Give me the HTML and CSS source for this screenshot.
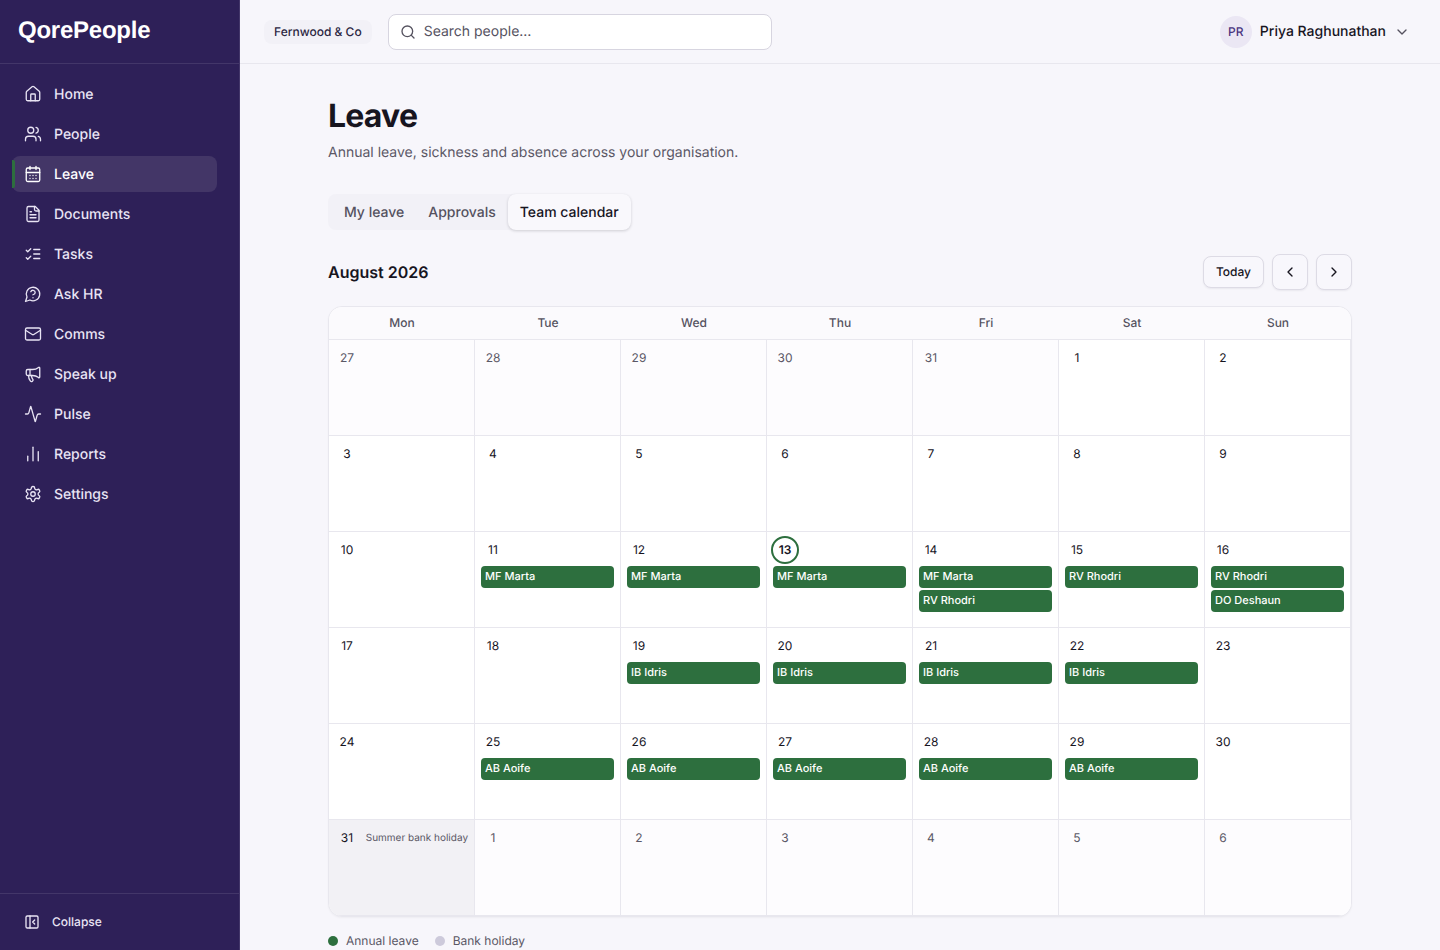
FILE: index.html
```html
<!DOCTYPE html>
<html lang="en">
<head>
    <meta charset="UTF-8">
    <meta name="viewport" content="width=device-width, initial-scale=1.0">
    <title>Leave - QorePeople</title>
    <link rel="stylesheet" href="styles.css">
</head>
<body>
    <aside class="sidebar">
        <div class="brand"><a href="#" class="logo">QorePeople</a></div>
        <nav class="nav">
            <a href="#"><svg class="icon" viewBox="0 0 24 24"><path d="M15 21v-8a1 1 0 0 0-1-1h-4a1 1 0 0 0-1 1v8"/><path d="M3 10a2 2 0 0 1 .709-1.528l7-6a2 2 0 0 1 2.582 0l7 6A2 2 0 0 1 21 10v9a2 2 0 0 1-2 2H5a2 2 0 0 1-2-2z"/></svg>Home</a>
            <a href="#"><svg class="icon" viewBox="0 0 24 24"><path d="M16 21v-2a4 4 0 0 0-4-4H6a4 4 0 0 0-4 4v2"/><circle cx="9" cy="7" r="4"/><path d="M22 21v-2a4 4 0 0 0-3-3.87"/><path d="M16 3.13a4 4 0 0 1 0 7.75"/></svg>People</a>
            <a href="#" class="active" aria-current="page"><svg class="icon" viewBox="0 0 24 24"><path d="M8 2v4"/><path d="M16 2v4"/><rect x="3" y="4" width="18" height="18" rx="2"/><path d="M3 10h18"/><path d="M8 14h.01M12 14h.01M16 14h.01M8 18h.01M12 18h.01M16 18h.01"/></svg>Leave</a>
            <a href="#"><svg class="icon" viewBox="0 0 24 24"><path d="M15 2H6a2 2 0 0 0-2 2v16a2 2 0 0 0 2 2h12a2 2 0 0 0 2-2V7Z"/><path d="M14 2v4a2 2 0 0 0 2 2h4"/><path d="M10 9H8"/><path d="M16 13H8"/><path d="M16 17H8"/></svg>Documents</a>
            <a href="#"><svg class="icon" viewBox="0 0 24 24"><path d="m3 17 2 2 4-4"/><path d="m3 7 2 2 4-4"/><path d="M13 6h8"/><path d="M13 12h8"/><path d="M13 18h8"/></svg>Tasks</a>
            <a href="#"><svg class="icon" viewBox="0 0 24 24"><path d="M7.9 20A9 9 0 1 0 4 16.1L2 22Z"/><path d="M9.09 9a3 3 0 0 1 5.83 1c0 2-3 3-3 3"/><path d="M12 17h.01"/></svg>Ask HR</a>
            <a href="#"><svg class="icon" viewBox="0 0 24 24"><rect x="2" y="4" width="20" height="16" rx="2"/><path d="m22 7-8.97 5.7a1.94 1.94 0 0 1-2.06 0L2 7"/></svg>Comms</a>
            <a href="#"><svg class="icon" viewBox="0 0 24 24"><path d="M11 6a13 13 0 0 0 8.4-2.8A1 1 0 0 1 21 4v12a1 1 0 0 1-1.6.8A13 13 0 0 0 11 14H5a2 2 0 0 1-2-2V8a2 2 0 0 1 2-2z"/><path d="M6 14a12 12 0 0 0 2.4 7.2 2 2 0 0 0 3.2-2.4A8 8 0 0 1 10 14"/><path d="M8 6v8"/></svg>Speak up</a>
            <a href="#"><svg class="icon" viewBox="0 0 24 24"><path d="M22 12h-2.48a2 2 0 0 0-1.93 1.46l-2.35 8.36a.25.25 0 0 1-.48 0L9.24 2.18a.25.25 0 0 0-.48 0l-2.35 8.36A2 2 0 0 1 4.49 12H2"/></svg>Pulse</a>
            <a href="#"><svg class="icon" viewBox="0 0 24 24"><path d="M5 21v-6"/><path d="M12 21V3"/><path d="M19 21V9"/></svg>Reports</a>
            <a href="#"><svg class="icon" viewBox="0 0 24 24"><path d="M12.22 2h-.44a2 2 0 0 0-2 2v.18a2 2 0 0 1-1 1.73l-.43.25a2 2 0 0 1-2 0l-.15-.08a2 2 0 0 0-2.73.73l-.22.38a2 2 0 0 0 .73 2.73l.15.1a2 2 0 0 1 1 1.72v.51a2 2 0 0 1-1 1.74l-.15.09a2 2 0 0 0-.73 2.73l.22.38a2 2 0 0 0 2.73.73l.15-.08a2 2 0 0 1 2 0l.43.25a2 2 0 0 1 1 1.73V20a2 2 0 0 0 2 2h.44a2 2 0 0 0 2-2v-.18a2 2 0 0 1 1-1.73l.43-.25a2 2 0 0 1 2 0l.15.08a2 2 0 0 0 2.73-.73l.22-.39a2 2 0 0 0-.73-2.73l-.15-.08a2 2 0 0 1-1-1.74v-.5a2 2 0 0 1 1-1.74l.15-.09a2 2 0 0 0 .73-2.73l-.22-.38a2 2 0 0 0-2.73-.73l-.15.08a2 2 0 0 1-2 0l-.43-.25a2 2 0 0 1-1-1.73V4a2 2 0 0 0-2-2z"/><circle cx="12" cy="12" r="3"/></svg>Settings</a>
        </nav>
        <div class="sidebar-footer">
            <button type="button" class="collapse"><svg class="icon" viewBox="0 0 24 24"><rect x="3" y="3" width="18" height="18" rx="2"/><path d="M9 3v18"/><path d="m16 15-3-3 3-3"/></svg>Collapse</button>
        </div>
    </aside>

    <div class="page">
        <header class="topbar">
            <span class="company">Fernwood &amp; Co</span>
            <label class="search">
                <svg class="icon" viewBox="0 0 24 24"><circle cx="11" cy="11" r="8"/><path d="m21 21-4.3-4.3"/></svg>
                <input type="search" placeholder="Search people…" aria-label="Search people">
            </label>
            <button type="button" class="user">
                <span class="avatar">PR</span>
                <span>Priya Raghunathan</span>
                <svg class="icon" viewBox="0 0 24 24"><path d="m6 9 6 6 6-6"/></svg>
            </button>
        </header>

        <main class="content">
            <h1>Leave</h1>
            <p class="subtitle">Annual leave, sickness and absence across your organisation.</p>

            <div class="tabs" role="tablist">
                <button type="button" role="tab" aria-selected="false">My leave</button>
                <button type="button" role="tab" aria-selected="false">Approvals</button>
                <button type="button" role="tab" aria-selected="true" class="selected">Team calendar</button>
            </div>

            <div class="month-bar">
                <h2>August 2026</h2>
                <div class="month-controls">
                    <button type="button" class="today-button">Today</button>
                    <button type="button" class="arrow" aria-label="Previous month"><svg class="icon" viewBox="0 0 24 24"><path d="m15 18-6-6 6-6"/></svg></button>
                    <button type="button" class="arrow" aria-label="Next month"><svg class="icon" viewBox="0 0 24 24"><path d="m9 18 6-6-6-6"/></svg></button>
                </div>
            </div>

            <div class="calendar">
                <table>
                    <thead>
                        <tr><th>Mon</th><th>Tue</th><th>Wed</th><th>Thu</th><th>Fri</th><th>Sat</th><th>Sun</th></tr>
                    </thead>
                    <tbody>
                        <tr>
                            <td class="outside"><span class="day">27</span></td>
                            <td class="outside"><span class="day">28</span></td>
                            <td class="outside"><span class="day">29</span></td>
                            <td class="outside"><span class="day">30</span></td>
                            <td class="outside"><span class="day">31</span></td>
                            <td><span class="day">1</span></td>
                            <td><span class="day">2</span></td>
                        </tr>
                        <tr>
                            <td><span class="day">3</span></td>
                            <td><span class="day">4</span></td>
                            <td><span class="day">5</span></td>
                            <td><span class="day">6</span></td>
                            <td><span class="day">7</span></td>
                            <td><span class="day">8</span></td>
                            <td><span class="day">9</span></td>
                        </tr>
                        <tr>
                            <td><span class="day">10</span></td>
                            <td><span class="day">11</span><div class="event">MF Marta</div></td>
                            <td><span class="day">12</span><div class="event">MF Marta</div></td>
                            <td><span class="day today">13</span><div class="event">MF Marta</div></td>
                            <td><span class="day">14</span><div class="event">MF Marta</div><div class="event">RV Rhodri</div></td>
                            <td><span class="day">15</span><div class="event">RV Rhodri</div></td>
                            <td><span class="day">16</span><div class="event">RV Rhodri</div><div class="event">DO Deshaun</div></td>
                        </tr>
                        <tr>
                            <td><span class="day">17</span></td>
                            <td><span class="day">18</span></td>
                            <td><span class="day">19</span><div class="event">IB Idris</div></td>
                            <td><span class="day">20</span><div class="event">IB Idris</div></td>
                            <td><span class="day">21</span><div class="event">IB Idris</div></td>
                            <td><span class="day">22</span><div class="event">IB Idris</div></td>
                            <td><span class="day">23</span></td>
                        </tr>
                        <tr>
                            <td><span class="day">24</span></td>
                            <td><span class="day">25</span><div class="event">AB Aoife</div></td>
                            <td><span class="day">26</span><div class="event">AB Aoife</div></td>
                            <td><span class="day">27</span><div class="event">AB Aoife</div></td>
                            <td><span class="day">28</span><div class="event">AB Aoife</div></td>
                            <td><span class="day">29</span><div class="event">AB Aoife</div></td>
                            <td><span class="day">30</span></td>
                        </tr>
                        <tr>
                            <td class="holiday"><div class="day-row"><span class="day">31</span><span class="holiday-name">Summer bank holiday</span></div></td>
                            <td class="outside"><span class="day">1</span></td>
                            <td class="outside"><span class="day">2</span></td>
                            <td class="outside"><span class="day">3</span></td>
                            <td class="outside"><span class="day">4</span></td>
                            <td class="outside"><span class="day">5</span></td>
                            <td class="outside"><span class="day">6</span></td>
                        </tr>
                    </tbody>
                </table>
            </div>

            <ul class="legend">
                <li><span class="dot dot-leave"></span>Annual leave</li>
                <li><span class="dot dot-holiday"></span>Bank holiday</li>
            </ul>
        </main>
    </div>
</body>
</html>
```

FILE: styles.css
```css
* {
    box-sizing: border-box;
}

body {
    margin: 0;
    display: flex;
    height: 100vh;
    overflow: hidden;
    background: #f7f6fb;
    color: #17151f;
    font-family: Inter, "Liberation Sans", sans-serif;
    font-size: 14px;
    line-height: 21px;
    text-rendering: geometricPrecision;
}

button,
input {
    font: inherit;
    color: inherit;
    text-rendering: inherit;
}

button {
    cursor: pointer;
}

.icon {
    width: 16px;
    height: 16px;
    flex: none;
    fill: none;
    stroke: currentColor;
    stroke-width: 2;
    stroke-linecap: round;
    stroke-linejoin: round;
}

/* Sidebar */
.sidebar {
    width: 240px;
    flex: none;
    display: flex;
    flex-direction: column;
    background: #2e2058;
    border-right: 1px solid #433669;
    color: #e9e4f4;
}

.brand {
    height: 64px;
    display: flex;
    align-items: center;
    padding: 0 18px 2px;
    border-bottom: 1px solid #433669;
}

.logo {
    color: #fff;
    font-family: "Liberation Sans", Arial, sans-serif;
    font-size: 24px;
    font-weight: 700;
    letter-spacing: -0.01em;
    text-decoration: none;
}

.nav {
    flex: 1;
    display: flex;
    flex-direction: column;
    gap: 4px;
    padding: 12px 22px 12px 12px;
    overflow: hidden;
}

.nav a {
    height: 36px;
    display: flex;
    align-items: center;
    gap: 12px;
    padding: 0 12px;
    border-radius: 8px;
    color: inherit;
    font-weight: 500;
    text-decoration: none;
}

.nav .icon {
    width: 18px;
    height: 18px;
    stroke-width: 1.75;
}

.nav a.active {
    position: relative;
    background: #433667;
    color: #fff;
}

.nav a.active::before {
    content: "";
    position: absolute;
    left: 0;
    top: 4px;
    bottom: 4px;
    width: 3px;
    border-radius: 0 2px 2px 0;
    background: #2d6f3e;
}

.sidebar-footer {
    padding: 10px 12px;
    border-top: 1px solid #433669;
}

.collapse {
    width: 100%;
    height: 36px;
    display: flex;
    align-items: center;
    gap: 12px;
    padding: 0 12px;
    border: 0;
    background: none;
    font-size: 12px;
    line-height: 20px;
    font-weight: 500;
}

/* Top bar */
.page {
    flex: 1;
    min-width: 0;
}

.topbar {
    height: 64px;
    display: flex;
    align-items: center;
    gap: 16px;
    padding: 0 24px;
    border-bottom: 1px solid #e8e7ee;
}

.company {
    padding: 2px 10px;
    border-radius: 8px;
    background: #f2f1f7;
    color: #2c2742;
    font-size: 12px;
    line-height: 20px;
    font-weight: 500;
}

.search {
    width: 384px;
    height: 36px;
    display: flex;
    align-items: center;
    gap: 8px;
    padding: 0 11px;
    border: 1px solid #d7d5e0;
    border-radius: 8px;
    background: #fff;
    color: #55525f;
}

.search input {
    flex: 1;
    min-width: 0;
    height: 21px;
    padding: 0;
    border: 0;
    outline: 0;
    background: none;
}

.search input::placeholder {
    color: #55525f;
    opacity: 1;
}

.user {
    display: flex;
    align-items: center;
    gap: 8px;
    margin-left: auto;
    padding: 0 6px;
    border: 0;
    background: none;
    font-weight: 500;
}

.user .icon {
    color: #55525f;
}

.avatar {
    width: 32px;
    height: 32px;
    display: grid;
    place-items: center;
    border-radius: 50%;
    background: #ebe7f4;
    color: #4a3580;
    font-size: 12px;
    line-height: 20px;
}

/* Content */
.content {
    max-width: 1072px;
    margin: 0 auto;
    padding: 32px 24px;
}

h1 {
    margin: 0;
    font-size: 32px;
    line-height: 40px;
    font-weight: 700;
    letter-spacing: -0.025em;
}

.subtitle {
    margin: 6px 0 31px;
    color: #5b5866;
}

.tabs {
    width: fit-content;
    height: 36px;
    display: flex;
    padding-left: 4px;
    border-radius: 8px;
    background: #f2f1f7;
}

.tabs button {
    padding: 0 12px;
    border: 0;
    border-radius: 8px;
    background: none;
    color: #55525f;
    font-weight: 500;
}

.tabs .selected {
    background: #f9f8fc;
    color: #17151f;
    box-shadow: 0 1px 3px rgba(23, 21, 31, 0.18);
}

.month-bar {
    display: flex;
    align-items: center;
    justify-content: space-between;
    margin: 24px 0 16px;
}

h2 {
    margin: 0;
    font-size: 16px;
    line-height: 24px;
    font-weight: 600;
}

.month-controls {
    display: flex;
    align-items: center;
    gap: 8px;
}

.month-controls button {
    border: 1px solid #dddbe5;
    border-radius: 8px;
    background: #f8f7fc;
    box-shadow: 0 1px 2px rgba(23, 21, 31, 0.06);
}

.month-controls .today-button {
    height: 32px;
    padding: 0 12px;
    font-size: 12px;
    line-height: 20px;
    font-weight: 500;
}

.arrow {
    width: 36px;
    height: 36px;
    display: grid;
    place-items: center;
    padding: 0;
}

/* Calendar */
.calendar {
    overflow: hidden;
    border: 1px solid #e8e7ee;
    border-radius: 14px;
    background: #fff;
    box-shadow: 0 1px 2px rgba(23, 21, 31, 0.04);
}

table {
    width: 100%;
    border-spacing: 0;
    table-layout: fixed;
}

th {
    height: 33px;
    padding: 0;
    border-bottom: 1px solid #e8e7ee;
    background: #fbfafd;
    color: #55525f;
    font-size: 12px;
    line-height: 20px;
    font-weight: 500;
}

td {
    height: 96px;
    padding: 4px;
    border-right: 1px solid #e8e7ee;
    border-bottom: 1px solid #e8e7ee;
    vertical-align: top;
}

tbody tr:last-child td:last-child {
    border-right-color: transparent;
}

.outside {
    background: #fdfcfe;
}

.outside .day {
    color: #5b5866;
}

.day {
    width: 28px;
    height: 28px;
    display: grid;
    place-items: center;
    flex: none;
    font-size: 12px;
    line-height: 16px;
}

.today {
    border: 2px solid #2d6f3e;
    border-radius: 50%;
    font-weight: 600;
}

.event {
    height: 22px;
    margin: 2px 2px 0;
    padding: 0 4px;
    border-radius: 4px;
    background: #2d6f3e;
    color: #fff;
    font-size: 11px;
    font-weight: 500;
    line-height: 20px;
    white-space: nowrap;
    overflow: hidden;
}

.holiday {
    background: #f2f1f5;
}

.day-row {
    display: flex;
    align-items: center;
    justify-content: space-between;
    padding-right: 2px;
}

.holiday-name {
    color: #5b5866;
    font-size: 10px;
    white-space: nowrap;
}

.legend {
    display: flex;
    gap: 16px;
    margin: 14px 0 0;
    padding: 0;
    color: #5b5866;
    font-size: 12px;
    line-height: 20px;
    list-style: none;
}

.legend li {
    display: flex;
    align-items: center;
    gap: 8px;
}

.dot {
    width: 10px;
    height: 10px;
    border-radius: 50%;
}

.dot-leave {
    background: #2d6f3e;
}

.dot-holiday {
    background: #cdcadb;
}
```
